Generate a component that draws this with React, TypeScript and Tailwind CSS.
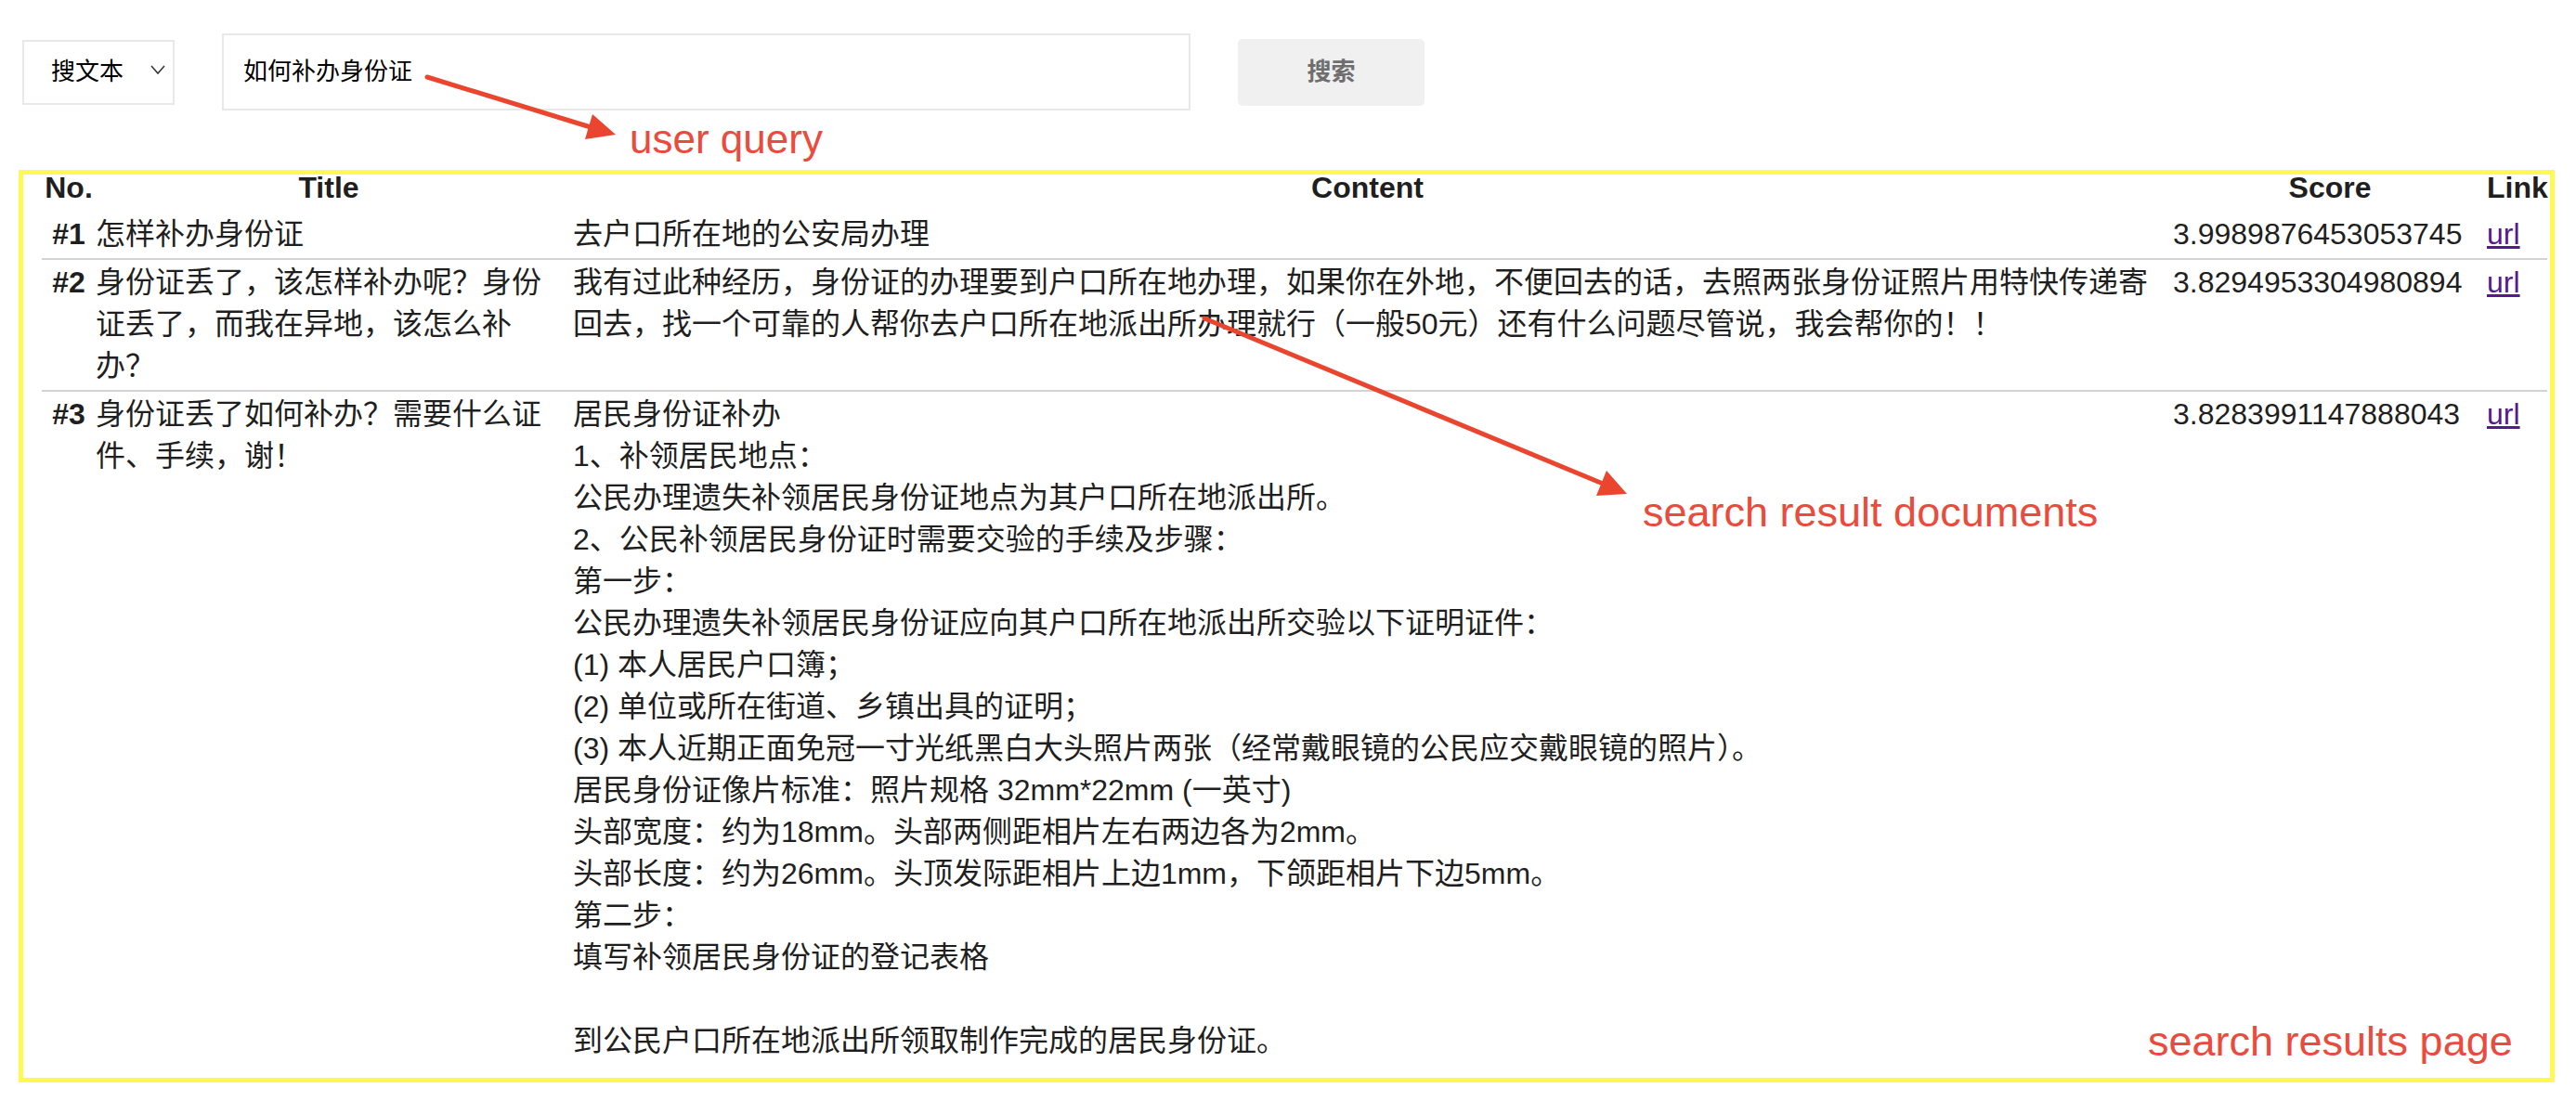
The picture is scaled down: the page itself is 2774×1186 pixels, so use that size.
import React from "react";

const rows = [
  {
    no: "#1",
    title: "怎样补办身份证",
    content: "去户口所在地的公安局办理",
    score: "3.9989876453053745",
  },
  {
    no: "#2",
    title: "身份证丢了，该怎样补办呢？身份证丢了，而我在异地，该怎么补办？",
    content:
      "我有过此种经历，身份证的办理要到户口所在地办理，如果你在外地，不便回去的话，去照两张身份证照片用特快传递寄回去，找一个可靠的人帮你去户口所在地派出所办理就行（一般50元）还有什么问题尽管说，我会帮你的！！",
    score: "3.8294953304980894",
  },
  {
    no: "#3",
    title: "身份证丢了如何补办？需要什么证件、手续，谢！",
    content: [
      "居民身份证补办",
      "1、补领居民地点：",
      "公民办理遗失补领居民身份证地点为其户口所在地派出所。",
      "2、公民补领居民身份证时需要交验的手续及步骤：",
      "第一步：",
      "公民办理遗失补领居民身份证应向其户口所在地派出所交验以下证明证件：",
      "(1) 本人居民户口簿；",
      "(2) 单位或所在街道、乡镇出具的证明；",
      "(3) 本人近期正面免冠一寸光纸黑白大头照片两张（经常戴眼镜的公民应交戴眼镜的照片）。",
      "居民身份证像片标准：照片规格 32mm*22mm (一英寸)",
      "头部宽度：约为18mm。头部两侧距相片左右两边各为2mm。",
      "头部长度：约为26mm。头顶发际距相片上边1mm，下颌距相片下边5mm。",
      "第二步：",
      "填写补领居民身份证的登记表格",
      "",
      "到公民户口所在地派出所领取制作完成的居民身份证。",
    ].join("\n"),
    score: "3.8283991147888043",
  },
];

const cols = "grid grid-cols-[58px_514px_1723px_338px_65px]";

export default function App() {
  return (
    <main className="relative h-[1186px] w-[2774px] overflow-hidden bg-white font-['Liberation_Sans','Noto_Sans_CJK_SC',sans-serif] text-[#1f1f1f]">
      {/* search bar */}
      <div className="flex items-center gap-[51px] pl-[24px] pt-[36px]">
        <div className="flex h-[70px] w-[164px] items-center justify-between border-2 border-[#e8e8e8] pl-[29px] pr-[8px] text-[26px] text-black">
          <span>搜文本</span>
          <svg width="16" height="11" viewBox="0 0 16 11" className="mt-[-4px]">
            <polyline points="1,1 8,9 15,1" fill="none" stroke="#333" strokeWidth="1.5" />
          </svg>
        </div>
        <div className="flex h-[83px] w-[1043px] items-center border-2 border-[#e8e8e8] pl-[21px] text-[26px] text-black">
          如何补办身份证
        </div>
        <button className="h-[72px] w-[201px] rounded-[5px] bg-[#f0f0f0] text-[26px] font-semibold text-[#6e6e6e]">
          搜索
        </button>
      </div>

      {/* results table */}
      <div className="ml-[45px] mt-[61px] w-[2698px] text-[32px] leading-[45px]">
        <div className={`${cols} font-bold text-center`}>
          <div>No.</div>
          <div className="pr-[12px]">Title</div>
          <div className="pr-[12px]">Content</div>
          <div>Score</div>
          <div>Link</div>
        </div>
        {rows.map((r, i) => (
          <div
            key={r.no}
            className={`${cols} ${i === 0 ? "pt-[5px]" : "pt-[2px]"} ${i < rows.length - 1 ? "border-b-2 border-[#d3d3d3] pb-[3px]" : ""}`}
          >
            <div className="text-center font-bold">{r.no}</div>
            <div className="pr-[12px]">{r.title}</div>
            <div className="whitespace-pre-line pr-[12px]">{r.content}</div>
            <div>{r.score}</div>
            <div>
              <a href="#" className="text-[#551a8b] underline">
                url
              </a>
            </div>
          </div>
        ))}
      </div>

      {/* annotations */}
      <div className="pointer-events-none absolute left-[20px] top-[183px] h-[983px] w-[2731px] border-[5px] border-[#fff952]" />
      <svg className="pointer-events-none absolute left-0 top-0" width="2774" height="1186">
        <line x1="460" y1="83" x2="636" y2="137" stroke="#e9452f" strokeWidth="5" strokeLinecap="round" />
        <polygon points="663,145 630,150 638,123" fill="#e9452f" />
        <line x1="1297" y1="343" x2="1726" y2="521" stroke="#e9452f" strokeWidth="5" strokeLinecap="round" />
        <polygon points="1752,532 1719,534 1730,507" fill="#e9452f" />
      </svg>
      <div className="absolute left-[678px] top-[128px] text-[44px] leading-none text-[#e94b3c]">user query</div>
      <div className="absolute left-[1769px] top-[529px] text-[45px] leading-none text-[#e94b3c]">
        search result documents
      </div>
      <div className="absolute left-[2313px] top-[1099px] text-[45px] leading-none text-[#e94b3c]">
        search results page
      </div>
    </main>
  );
}
